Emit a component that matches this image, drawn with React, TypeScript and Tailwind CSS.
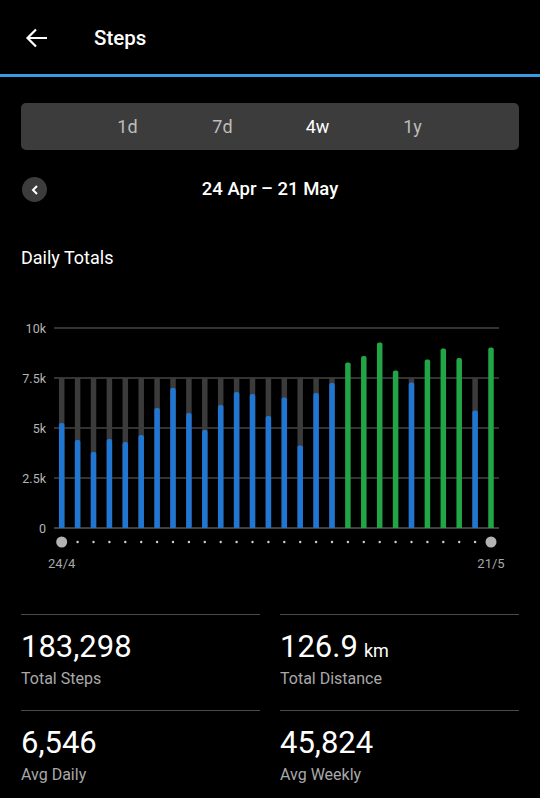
import React from 'react';

const steps = [
  5250, 4400, 3800, 4450, 4300, 4650, 6000, 7000, 5750, 4900, 6150, 6800, 6700, 5600,
  6530, 4120, 6750, 7250, 8280, 8600, 9280, 7870, 7280, 8430, 8970, 8500, 5880, 9020,
];

const GOAL = 7500;
const BASE = 228;
const PX_PER_STEP = 200 / 10000;
const barX = (i: number) => 61.7 + i * 15.9;
const valY = (v: number) => BASE - v * PX_PER_STEP;

// bar with rounded top only
const barPath = (cx: number, top: number, w: number, r: number) => {
  const l = cx - w / 2;
  const rr = cx + w / 2;
  return `M${l},${BASE} V${top + r} Q${l},${top} ${l + r},${top} H${rr - r} Q${rr},${top} ${rr},${top + r} V${BASE} Z`;
};

const StepsChart: React.FC = () => {
  const grid = [
    { v: 10000, label: '10k' },
    { v: 7500, label: '7.5k' },
    { v: 5000, label: '5k' },
    { v: 2500, label: '2.5k' },
    { v: 0, label: '0' },
  ];
  return (
    <svg width="540" height="280" viewBox="0 0 540 280" className="block">
      {grid.map((g) => (
        <g key={g.label}>
          <line x1="54" x2="499" y1={valY(g.v)} y2={valY(g.v)} stroke={g.v === 0 ? '#555' : '#444'} strokeWidth="1.5" />
          <text x="46" y={valY(g.v) + 4.5} textAnchor="end" fill="#b5b5b5" fontSize="12.5" fontFamily="Roboto, sans-serif">
            {g.label}
          </text>
        </g>
      ))}
      {steps.map((v, i) => {
        const cx = barX(i);
        const hit = v >= GOAL;
        return (
          <g key={i}>
            {!hit && <rect x={cx - 2.75} y={valY(GOAL)} width="5.5" height={BASE - valY(GOAL)} fill="#3b3b3b" />}
            <path d={barPath(cx, valY(v), 5.5, 2)} fill={hit ? '#22a546' : '#2176d2'} />
          </g>
        );
      })}
      {steps.map((_, i) =>
        i === 0 || i === steps.length - 1 ? (
          <circle key={i} cx={barX(i)} cy="242" r="5.5" fill="#b3b3b3" />
        ) : (
          <circle key={i} cx={barX(i)} cy="242" r="1.2" fill="#cfcfcf" />
        ),
      )}
      <text x={barX(0)} y="268" textAnchor="middle" fill="#a8a8a8" fontSize="13" fontFamily="Roboto, sans-serif">
        24/4
      </text>
      <text x={barX(27)} y="268" textAnchor="middle" fill="#a8a8a8" fontSize="13" fontFamily="Roboto, sans-serif">
        21/5
      </text>
    </svg>
  );
};

const Stat: React.FC<{ value: string; unit?: string; label: string }> = ({ value, unit, label }) => (
  <div className="border-t border-[#4a4a4a] pt-[14px] pb-[21px]">
    <div className="text-[31px] leading-[36px] text-white">
      {value}
      {unit && <span className="ml-[6px] text-[18px] leading-none">{unit}</span>}
    </div>
    <div className="mt-[4px] text-[16px] leading-[20px] text-[#a9a9a9]">{label}</div>
  </div>
);

export default function App() {
  const ranges = ['1d', '7d', '4w', '1y'];
  return (
    <div className="w-[540px] h-[798px] overflow-hidden bg-black font-['Roboto',sans-serif]">
      <header className="flex h-[74px] items-center pt-[2px]">
        <svg width="24" height="22" viewBox="0 0 24 22" className="ml-[25px]">
          <path d="M22 11H3 M11 2.5L2.5 11L11 19.5" stroke="#fff" strokeWidth="2.2" fill="none" />
        </svg>
        <h1 className="ml-[45px] text-[20.5px] font-medium text-white">Steps</h1>
      </header>
      <div className="h-[3px] bg-[#3a9ae0]" />

      <div className="mx-[21px] mt-[26px] flex h-[47px] items-center justify-center rounded-[5px] bg-[#3c3c3c]">
        {ranges.map((r) => (
          <div
            key={r}
            className={`w-[95px] text-center text-[18px] ${r === '4w' ? 'text-white' : 'text-[#bdbdbd]'}`}
          >
            {r}
          </div>
        ))}
      </div>

      <div className="relative mt-[28px] flex h-[24px] items-center justify-center">
        <div className="absolute left-[22px] -top-[1px] flex h-[25px] w-[25px] items-center justify-center rounded-full bg-[#3c3c3c]">
          <svg width="10" height="12" viewBox="0 0 10 12">
            <path d="M7 2L3 6L7 10" stroke="#fff" strokeWidth="2" fill="none" />
          </svg>
        </div>
        <span className="text-[18.5px] font-medium text-white">24 Apr – 21 May</span>
      </div>

      <h2 className="ml-[21px] mt-[44px] text-[18px] leading-[24px] text-white">Daily Totals</h2>

      <div className="mt-[30px]">
        <StepsChart />
      </div>

      <div className="mx-[21px] mt-[34px] grid grid-cols-2 gap-x-[20px]">
        <Stat value="183,298" label="Total Steps" />
        <Stat value="126.9" unit="km" label="Total Distance" />
        <Stat value="6,546" label="Avg Daily" />
        <Stat value="45,824" label="Avg Weekly" />
      </div>
    </div>
  );
}
